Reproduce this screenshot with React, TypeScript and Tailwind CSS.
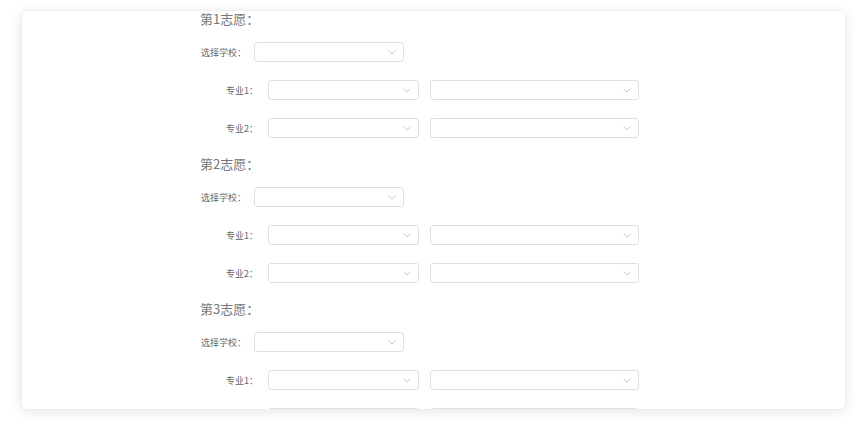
import React from 'react';

const FONT = '"Noto Sans CJK SC", "Noto Sans", sans-serif';

function Select({ width }: { width: string }) {
  return (
    <div
      className={`${width} h-[20px] shrink-0 bg-white border border-[#dcdfe6] rounded-[3px] flex items-center justify-end pr-[7px]`}
    >
      <svg width="8" height="5" viewBox="0 0 8 5" fill="none">
        <path d="M0.5 0.5 L4 4 L7.5 0.5" stroke="#c0c4cc" strokeWidth="0.9" />
      </svg>
    </div>
  );
}

function MajorRow({ n, showLabel = true }: { n: number; showLabel?: boolean }) {
  return (
    <div className="flex items-center h-[20px]">
      <div className="w-[68px] pr-[10px] text-right text-[9px] text-[#666] leading-none">
        {showLabel ? `专业${n}：` : ''}
      </div>
      <Select width="w-[151px]" />
      <div className="w-[11px]" />
      <Select width="w-[209px]" />
    </div>
  );
}

function Wish({ n, last = false }: { n: number; last?: boolean }) {
  return (
    <div className="flex flex-col">
      <div className="h-[18px] leading-[18px] text-[13px] text-[#777]">第{n}志愿：</div>
      <div className="flex items-center h-[20px] mt-[14px]">
        <div className="w-[54px] pl-[1px] text-[9px] text-[#666] leading-none">选择学校：</div>
        <Select width="w-[150px]" />
      </div>
      <div className="mt-[18px]">
        <MajorRow n={1} />
      </div>
      {/* last row of the third wish sits under the card edge */}
      <div className="mt-[18px] mb-[17px]">
        <MajorRow n={2} showLabel={!last} />
      </div>
    </div>
  );
}

export default function App() {
  return (
    <div className="w-[865px] h-[426px] bg-white pt-[10px] pl-[21px]" style={{ fontFamily: FONT }}>
      <div className="w-[825px] h-[400px] bg-white border border-[#ebeef5] rounded-[6px] shadow-[0_2px_12px_0_rgba(0,0,0,0.1)] overflow-hidden">
        <div className="pl-[178px] -mt-[1px]">
          <Wish n={1} />
          <Wish n={2} />
          <Wish n={3} last />
        </div>
      </div>
    </div>
  );
}
